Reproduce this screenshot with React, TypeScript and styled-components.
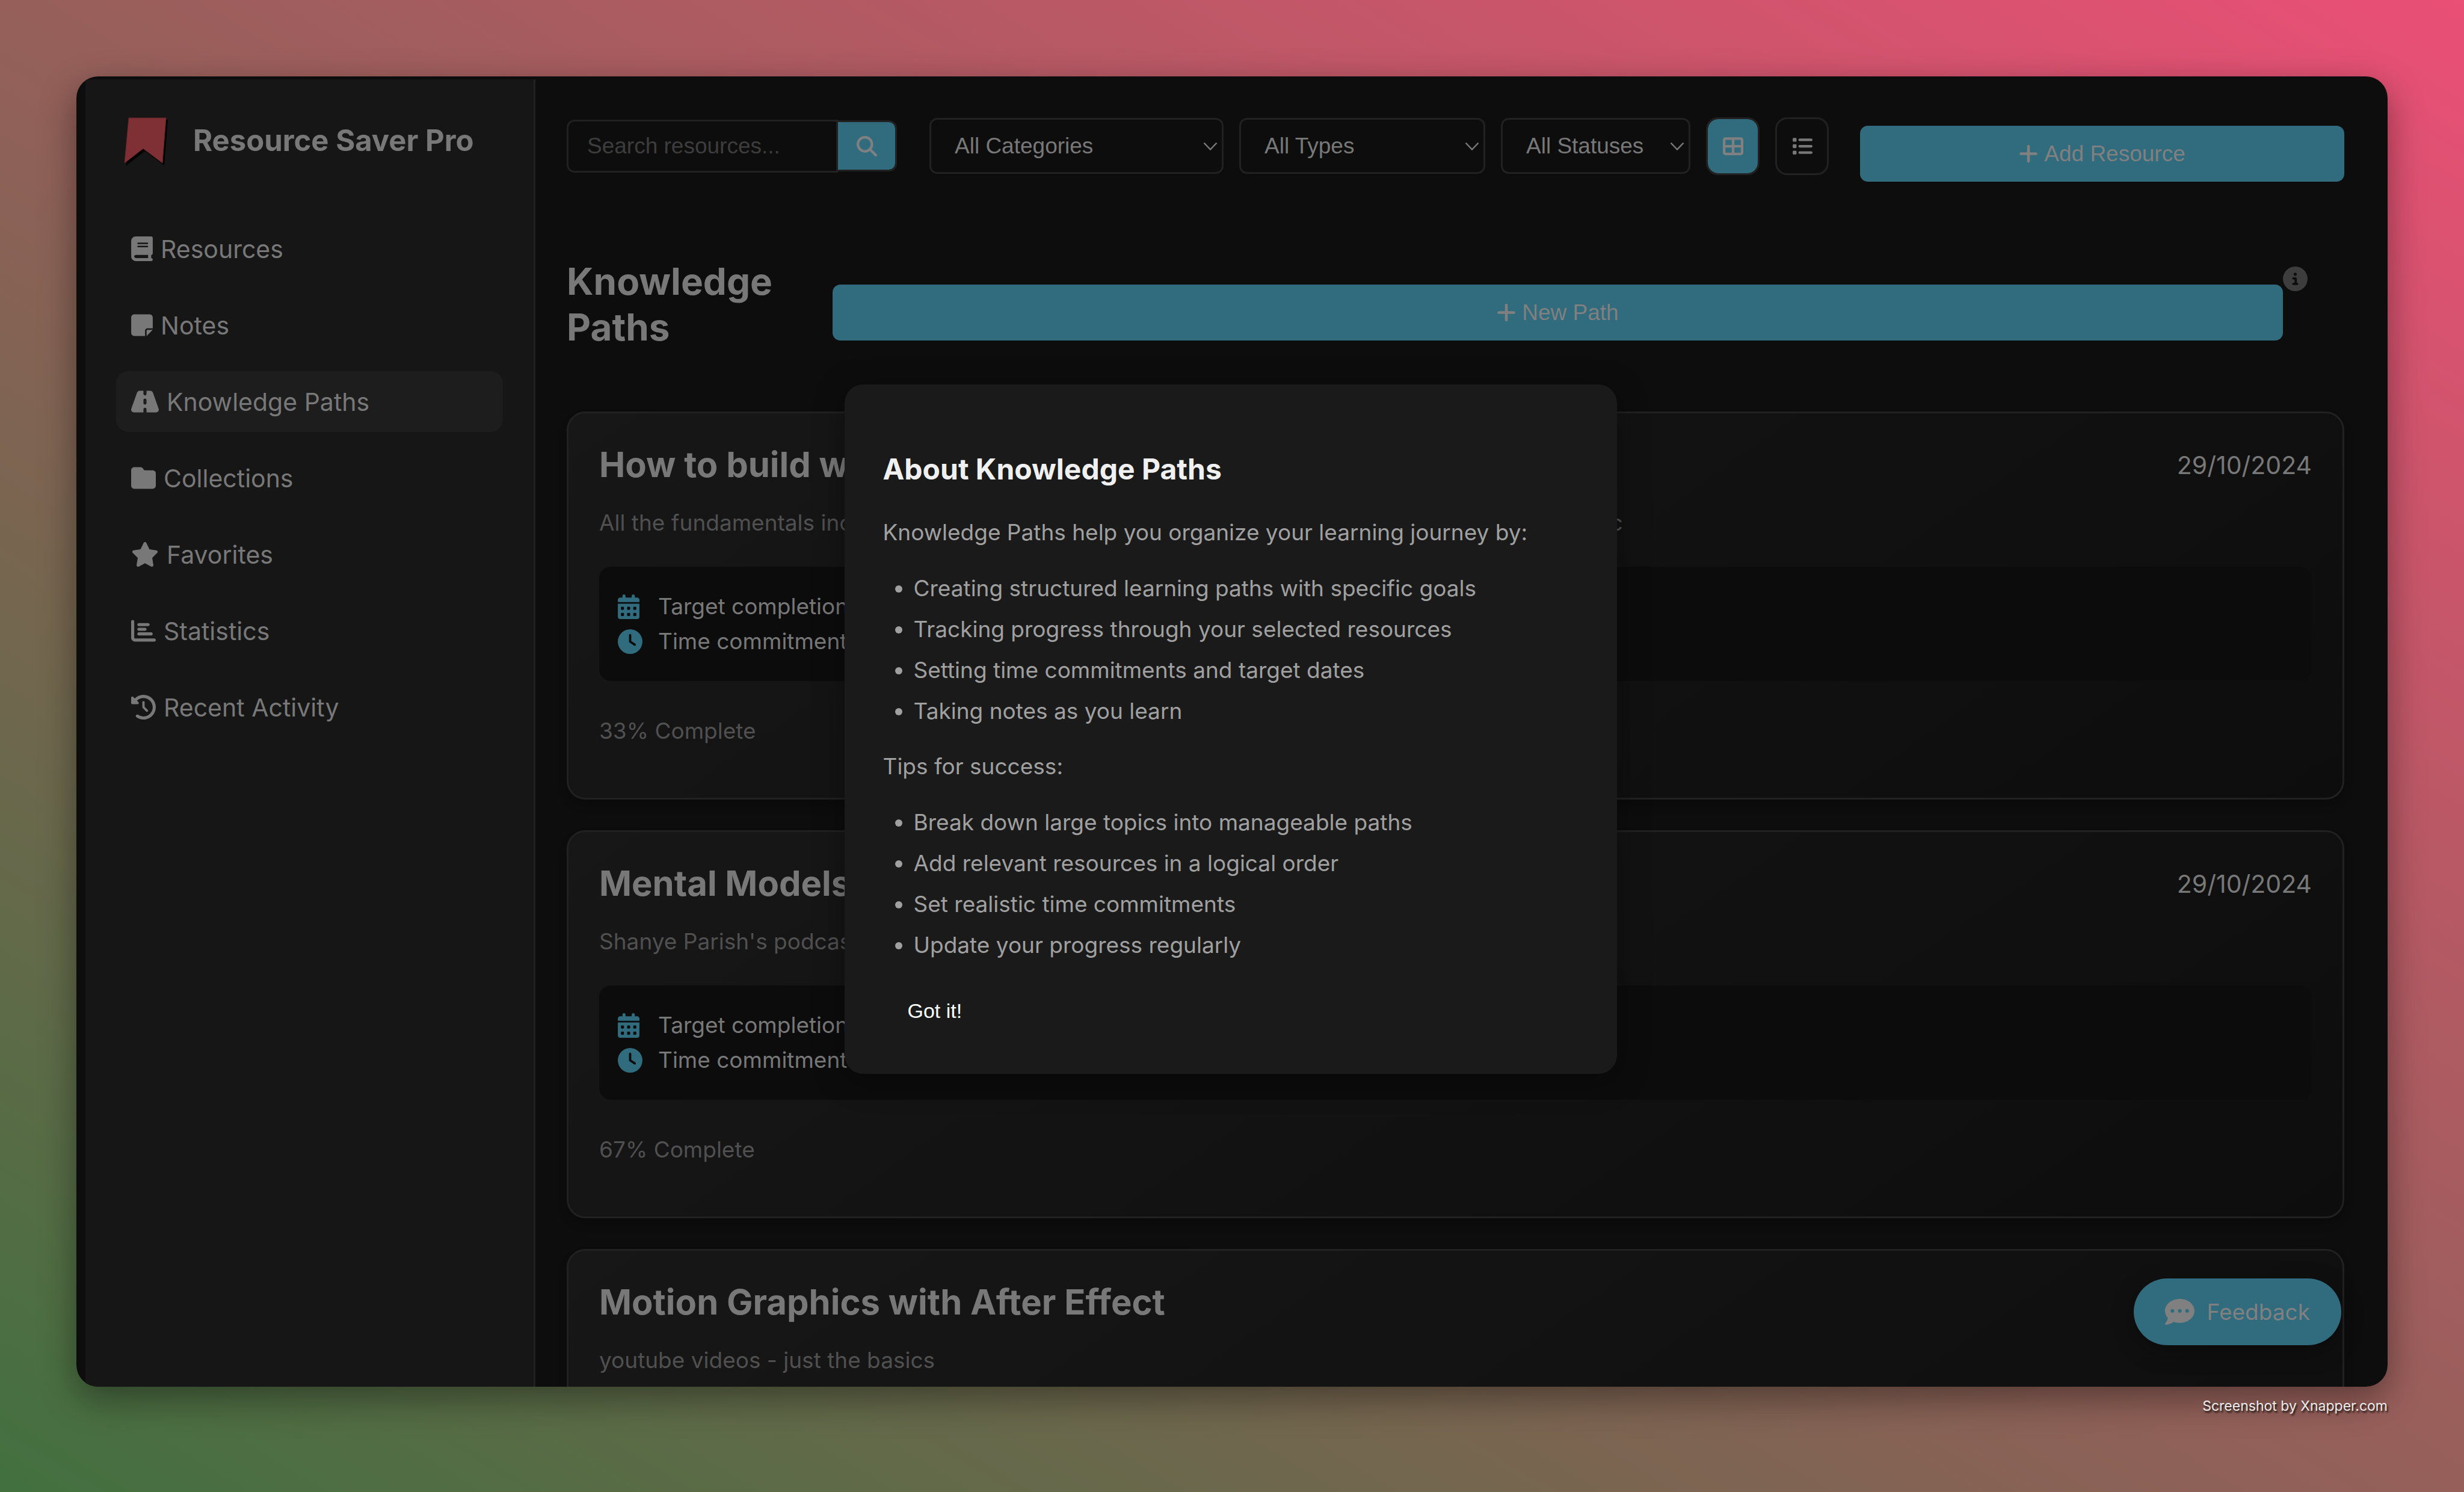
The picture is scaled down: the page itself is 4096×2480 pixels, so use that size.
import React from "react";
import styled, { createGlobalStyle } from "styled-components";
import {
  FaBook,
  FaNoteSticky,
  FaRoad,
  FaFolder,
  FaStar,
  FaChartBar,
  FaClockRotateLeft,
  FaMagnifyingGlass,
  FaTableCellsLarge,
  FaList,
  FaPlus,
  FaCircleInfo,
  FaCalendarDays,
  FaClock,
  FaCommentDots,
} from "react-icons/fa6";

const color = {
  window: "#0d0d0d",
  sidebar: "#161616",
  active: "#1d1d1d",
  line: "#212121",
  teal: "#306b7e",
  text: "#787878",
  muted: "#505050",
  faint: "#3d3d3d",
  onTeal: "#808080",
  dialog: "#1a1a1a",
  dialogTitle: "#f0f0f0",
  dialogText: "#a0a0a0",
};

const uiFont = `Inter, "Liberation Sans", sans-serif`;
const controlFont = `"Liberation Sans", Arial, sans-serif`;

const GlobalStyle = createGlobalStyle`
  *, *::before, *::after { box-sizing: border-box; }
  body { margin: 0; font-family: ${uiFont}; }
  h1, h2, h3, p, ul { margin: 0; padding: 0; }
  button, input, select { margin: 0; font-family: ${controlFont}; }
`;

const Page = styled.div`
  display: flex;
  flex-direction: column;
  height: 100vh;
  padding: 127px 127px 0;
  background: linear-gradient(to top right, #42703f, #ea4f75);
`;

const WindowShadow = styled.div`
  display: flex;
  flex: 1;
  min-height: 0;
  border-radius: 36px;
  box-shadow: 0 20px 60px rgba(0, 0, 0, 0.4);
`;

const Window = styled.div`
  position: relative;
  display: flex;
  flex: 1;
  min-width: 0;
  padding: 5px 0 0 15px;
  overflow: hidden;
  border-radius: 36px;
  background: ${color.window};
`;

const Footer = styled.footer`
  flex: none;
  height: 175px;
  padding-top: 18px;
  text-align: right;
  font-size: 23px;
  line-height: 28px;
  color: #ececec;
  text-shadow: 2px 3px 3px rgba(0, 0, 0, 0.8);
`;

/* Glyphs share the line's height while the width follows each drawing */
const Glyph = styled.span<{ $width: number; $height?: number }>`
  display: flex;
  flex: none;

  svg {
    width: ${(p) => p.$width}px;
    height: ${(p) => p.$height ?? 41}px;
  }
`;

const Sidebar = styled.aside`
  flex: none;
  width: 748px;
  padding: 51px;
  border-right: 3px solid ${color.line};
  background: ${color.sidebar};
`;

const Brand = styled.div`
  display: flex;
  align-items: center;
  gap: 26px;
  margin-bottom: 78px;

  svg {
    flex: none;
    width: 102px;
    height: 102px;
  }
`;

const BrandName = styled.h1`
  font-size: 49px;
  line-height: 62px;
  font-weight: 700;
  white-space: nowrap;
  color: ${color.text};
`;

const Nav = styled.nav`
  display: flex;
  flex-direction: column;
  gap: 26px;
`;

const NavLink = styled.a<{ $active?: boolean }>`
  display: flex;
  align-items: center;
  gap: 13px;
  height: 101px;
  padding: 0 25px;
  border-radius: 20px;
  background: ${(p) => (p.$active ? color.active : "transparent")};
  font-size: 41px;
  line-height: 50px;
  color: ${color.text};
  text-decoration: none;
`;

const Main = styled.main`
  flex: 1;
  min-width: 0;
  padding: 51px 72px 0 52px;
`;

const Toolbar = styled.div`
  display: flex;
  align-items: center;
  gap: 26px;
  margin-bottom: 128px;
`;

const Search = styled.form`
  display: flex;
  align-items: center;
  width: 549px;
  margin-right: 28px;
`;

const SearchInput = styled.input`
  flex: 1;
  min-width: 0;
  height: 88px;
  padding: 0 31px;
  border: 3px solid ${color.line};
  border-radius: 13px 0 0 13px;
  outline: none;
  background: ${color.window};
  font-size: 37px;
  color: ${color.text};

  &::placeholder {
    color: ${color.faint};
    opacity: 1;
  }
`;

const SearchButton = styled.button`
  display: flex;
  align-items: center;
  justify-content: center;
  width: 98px;
  height: 85px;
  padding: 0;
  border: 3px solid ${color.line};
  border-left: 0;
  border-radius: 0 13px 13px 0;
  background: ${color.teal};
  background-clip: padding-box;
  font-size: 34px;
  color: ${color.onTeal};
`;

const SelectBox = styled.label<{ $width: number }>`
  position: relative;
  flex: none;
  width: ${(p) => p.$width}px;

  select {
    appearance: none;
    display: block;
    width: 100%;
    height: 93px;
    padding: 0 39px;
    border: 3px solid ${color.line};
    border-radius: 13px;
    background: ${color.window};
    font-size: 37px;
    color: ${color.text};
  }

  svg {
    position: absolute;
    top: 40px;
    right: 10px;
    width: 24px;
    height: 15px;
    pointer-events: none;
  }
`;

const ViewButton = styled.button<{ $active?: boolean }>`
  display: flex;
  align-items: center;
  justify-content: center;
  flex: none;
  width: 89px;
  height: 96px;
  padding: 0;
  border: 3px solid ${color.line};
  border-radius: 20px;
  background: ${(p) => (p.$active ? color.teal : "transparent")};
  background-clip: padding-box;
  font-size: 34px;
  color: ${(p) => (p.$active ? color.onTeal : color.text)};
`;

const PrimaryButton = styled.button`
  display: flex;
  flex: 1;
  align-items: center;
  justify-content: center;
  gap: 10px;
  height: 93px;
  margin-top: 26px;
  padding: 0;
  border: 0;
  border-radius: 13px;
  background: ${color.teal};
  font-size: 37px;
  line-height: 43px;
  color: ${color.onTeal};
`;

const AddSlot = styled.div`
  display: flex;
  flex: 1;
  margin-left: 26px;
`;

const SectionHead = styled.div`
  display: flex;
  align-items: center;
  margin-bottom: 102px;
`;

const SectionTitle = styled.h2`
  flex: none;
  width: 442px;
  padding-right: 52px;
  font-size: 62px;
  line-height: 76px;
  font-weight: 700;
  color: ${color.text};
`;

const SectionActions = styled.div`
  display: flex;
  flex: 1;
  align-items: flex-start;
  padding: 0 61px 4px 0;
`;

const PathSlot = styled.div`
  display: flex;
  flex: 1;
  padding-top: 4px;
`;

const InfoButton = styled.button`
  display: flex;
  padding: 0;
  border: 0;
  background: none;
  font-size: 41px;
  color: ${color.faint};
`;

const CardList = styled.div`
  display: flex;
  flex-direction: column;
  gap: 51px;
`;

const Card = styled.article`
  min-height: 645px;
  padding: 51px;
  border: 3px solid ${color.line};
  border-radius: 31px;
  background: linear-gradient(145deg, #171717, #0d0d0d);
  box-shadow: 0 10px 15px rgba(0, 0, 0, 0.2);
`;

const CardHead = styled.header`
  display: flex;
  align-items: center;
  justify-content: space-between;
  margin-bottom: 39px;
`;

const CardTitle = styled.h3`
  font-size: 58px;
  line-height: 69px;
  font-weight: 700;
  color: ${color.text};
`;

const CardDate = styled.time`
  font-size: 41px;
  line-height: 50px;
  color: ${color.text};
`;

const CardText = styled.p`
  font-size: 37px;
  line-height: 45px;
  white-space: nowrap;
  color: ${color.muted};
`;

const Details = styled.div`
  margin: 51px 0 60px;
  padding: 37px 31px;
  border-radius: 20px;
  background: #0c0c0c;
`;

const DetailRow = styled.div`
  display: grid;
  grid-template-columns: 67px 1fr;
  align-items: center;
  height: 58px;
  font-size: 37px;
  line-height: 46px;
  color: ${color.text};

  svg {
    color: ${color.teal};
  }
`;

const Progress = styled.p`
  margin-bottom: 38px;
  font-size: 37px;
  line-height: 45px;
  color: ${color.muted};
`;

const FeedbackButton = styled.button`
  position: absolute;
  right: 77px;
  bottom: 69px;
  display: flex;
  align-items: center;
  gap: 21px;
  height: 111px;
  padding: 0 52px;
  border: 0;
  border-radius: 56px;
  background: ${color.teal};
  box-shadow: 0 10px 38px rgba(0, 0, 0, 0.3);
  font-family: ${uiFont};
  font-size: 37px;
  line-height: 46px;
  color: ${color.onTeal};
`;

const Overlay = styled.div`
  position: absolute;
  inset: 0 5px 8px 0;
  display: flex;
  align-items: center;
  justify-content: center;
`;

const Dialog = styled.section`
  width: 1284px;
  padding: 64px;
  border-radius: 31px;
  background: ${color.dialog};
  box-shadow: 0 10px 51px rgba(0, 0, 0, 0.35);
  font-size: 37px;
  line-height: 46px;
  color: ${color.dialogText};
`;

const DialogTitle = styled.h3`
  margin: 48px 0 53px;
  font-size: 48px;
  line-height: 58px;
  font-weight: 700;
  color: ${color.dialogTitle};
`;

const TipList = styled.ul`
  display: flex;
  flex-direction: column;
  gap: 22px;
  margin: 47px 0 46px;
  padding-left: 51px;
`;

const DialogButton = styled.button`
  display: block;
  padding: 21px 41px;
  border: 0;
  background: none;
  font-size: 34px;
  line-height: 39px;
  color: #ffffff;
`;

const BookmarkLogo = () => (
  <svg viewBox="0 0 102 102" aria-hidden="true">
    <path d="M24 16H86L80 92L48 68L17 92Z" fill="#000000" />
    <path d="M21 13H83L77 88L45 64L14 88Z" fill="#7e3035" stroke="#642529" strokeWidth="1" />
  </svg>
);

const Chevron = () => (
  <svg viewBox="0 0 24 15" fill="none" stroke={color.text} strokeWidth="2.5" aria-hidden="true">
    <path d="M1.5 1.5L12 12.5L22.5 1.5" />
  </svg>
);

const navItems = [
  { label: "Resources", Icon: FaBook, width: 36 },
  { label: "Notes", Icon: FaNoteSticky, width: 36 },
  { label: "Knowledge Paths", Icon: FaRoad, width: 46, active: true },
  { label: "Collections", Icon: FaFolder, width: 41 },
  { label: "Favorites", Icon: FaStar, width: 46 },
  { label: "Statistics", Icon: FaChartBar, width: 41 },
  { label: "Recent Activity", Icon: FaClockRotateLeft, width: 41 },
];

const filters = [
  { label: "All Categories", width: 489 },
  { label: "All Types", width: 409 },
  { label: "All Statuses", width: 315 },
];

type LearningPath = {
  title: string;
  text: string;
  date?: string;
  plan?: { target: string; time: string; progress: number };
};

const paths: LearningPath[] = [
  {
    title: "How to build websites",
    date: "29/10/2024",
    text: "All the fundamentals including design, layout, styling, responsive pages, deployment, hosting, etc",
    plan: { target: "31/12/2024", time: "5h", progress: 33 },
  },
  {
    title: "Mental Models",
    date: "29/10/2024",
    text: "Shanye Parish's podcast",
    plan: { target: "30/11/2024", time: "2h", progress: 67 },
  },
  {
    title: "Motion Graphics with After Effect",
    text: "youtube videos - just the basics",
  },
];

const benefits = [
  "Creating structured learning paths with specific goals",
  "Tracking progress through your selected resources",
  "Setting time commitments and target dates",
  "Taking notes as you learn",
];

const tips = [
  "Break down large topics into manageable paths",
  "Add relevant resources in a logical order",
  "Set realistic time commitments",
  "Update your progress regularly",
];

const PathCard = ({ title, text, date, plan }: LearningPath) => (
  <Card>
    <CardHead>
      <CardTitle>{title}</CardTitle>
      {date && <CardDate>{date}</CardDate>}
    </CardHead>
    <CardText>{text}</CardText>
    {plan && (
      <>
        <Details>
          <DetailRow>
            <Glyph $width={36}>
              <FaCalendarDays />
            </Glyph>
            <span>Target completion: {plan.target}</span>
          </DetailRow>
          <DetailRow>
            <Glyph $width={41}>
              <FaClock />
            </Glyph>
            <span>Time commitment: {plan.time}</span>
          </DetailRow>
        </Details>
        <Progress>{plan.progress}% Complete</Progress>
      </>
    )}
  </Card>
);

export default function App() {
  return (
    <Page>
      <GlobalStyle />
      <WindowShadow>
        <Window>
          <Sidebar>
            <Brand>
              <BookmarkLogo />
              <BrandName>Resource Saver Pro</BrandName>
            </Brand>
            <Nav>
              {navItems.map(({ label, Icon, width, active }) => (
                <NavLink key={label} href="#" $active={active}>
                  <Glyph $width={width}>
                    <Icon />
                  </Glyph>
                  {label}
                </NavLink>
              ))}
            </Nav>
          </Sidebar>

          <Main>
            <Toolbar>
              <Search>
                <SearchInput type="text" placeholder="Search resources..." aria-label="Search resources" />
                <SearchButton type="button" aria-label="Search">
                  <FaMagnifyingGlass />
                </SearchButton>
              </Search>
              {filters.map((f) => (
                <SelectBox key={f.label} $width={f.width}>
                  <select aria-label={f.label}>
                    <option>{f.label}</option>
                  </select>
                  <Chevron />
                </SelectBox>
              ))}
              <ViewButton type="button" $active aria-label="Grid view">
                <FaTableCellsLarge />
              </ViewButton>
              <ViewButton type="button" aria-label="List view">
                <FaList />
              </ViewButton>
              <AddSlot>
                <PrimaryButton type="button">
                  <Glyph $width={32} $height={37}>
                    <FaPlus />
                  </Glyph>
                  Add Resource
                </PrimaryButton>
              </AddSlot>
            </Toolbar>

            <SectionHead>
              <SectionTitle>Knowledge Paths</SectionTitle>
              <SectionActions>
                <PathSlot>
                  <PrimaryButton type="button">
                    <Glyph $width={32} $height={37}>
                      <FaPlus />
                    </Glyph>
                    New Path
                  </PrimaryButton>
                </PathSlot>
                <InfoButton type="button" aria-label="About Knowledge Paths">
                  <FaCircleInfo />
                </InfoButton>
              </SectionActions>
            </SectionHead>

            <CardList>
              {paths.map((p) => (
                <PathCard key={p.title} {...p} />
              ))}
            </CardList>
          </Main>

          <FeedbackButton type="button">
            <Glyph $width={49} $height={49}>
              <FaCommentDots />
            </Glyph>
            Feedback
          </FeedbackButton>

          <Overlay>
            <Dialog role="dialog" aria-labelledby="about-title">
              <DialogTitle id="about-title">About Knowledge Paths</DialogTitle>
              <p>Knowledge Paths help you organize your learning journey by:</p>
              <TipList>
                {benefits.map((b) => (
                  <li key={b}>{b}</li>
                ))}
              </TipList>
              <p>Tips for success:</p>
              <TipList>
                {tips.map((t) => (
                  <li key={t}>{t}</li>
                ))}
              </TipList>
              <DialogButton type="button">Got it!</DialogButton>
            </Dialog>
          </Overlay>
        </Window>
      </WindowShadow>
      <Footer>Screenshot by Xnapper.com</Footer>
    </Page>
  );
}
